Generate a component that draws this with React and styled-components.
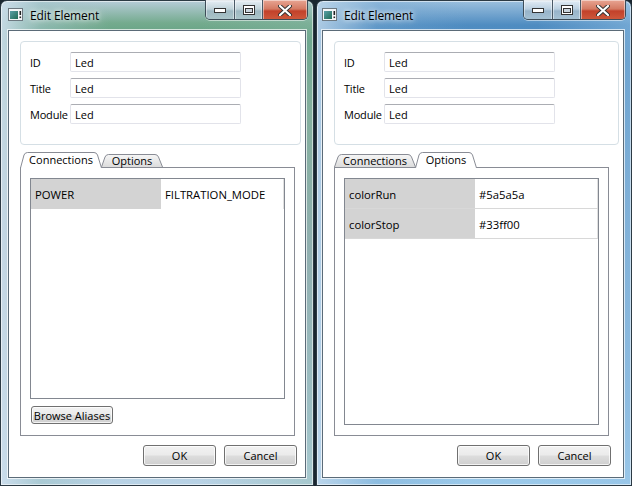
import React from "react";
import styled, { createGlobalStyle } from "styled-components";

const Global = createGlobalStyle`
  html, body { margin: 0; padding: 0; background: #16222b; }
  body { width: 632px; height: 486px; overflow: hidden; font-family: "Open Sans", "Noto Sans", sans-serif; }
  * { box-sizing: border-box; }
`;

const Desktop = styled.div`
  display: flex;
  gap: 2px;
  width: 632px;
  height: 486px;
  background: #1a2630;
`;

const frames = {
  green: `
    linear-gradient(90deg, rgba(205,222,236,0.9) 0px, rgba(160,196,200,0.6) 40px, rgba(90,160,125,0) 110px, rgba(0,0,0,0) 200px, rgba(140,185,170,0.4) 314px),
    linear-gradient(180deg, #b6ccd8 0px, #74ab8e 22px, #5e9d7f 40px, #7fa996 110px, #93a9b3 250px, #a9c4d6 420px, #b9d3e6 486px)
  `,
  blue: `
    linear-gradient(90deg, rgba(190,214,234,0.85) 0px, rgba(120,170,210,0.4) 60px, rgba(60,130,190,0) 150px, rgba(0,0,0,0) 220px, rgba(150,195,230,0.5) 316px),
    linear-gradient(180deg, #9cc0de 0px, #4f8cc1 24px, #4b88bd 60px, #6a9fcb 200px, #86b6dc 400px, #9ccaea 486px)
  `,
};

const Frame = styled.div`
  width: ${(p) => p.$w}px;
  height: 486px;
  border: 1px solid #2c3a44;
  border-radius: 7px 7px 0 0;
  background: ${(p) => frames[p.$tone]};
  box-shadow: inset 0 0 0 1px rgba(255,255,255,0.55);
  display: flex;
  flex-direction: column;
  padding: 0 ${(p) => p.$pr}px 7px ${(p) => p.$pl}px;
`;

const TitleBar = styled.div`
  height: 29px;
  display: flex;
  align-items: flex-start;
  position: relative;
`;

const AppIcon = styled.svg`
  margin: 7px 0 0 0;
  flex: none;
`;

const Title = styled.div`
  margin: 6px 0 0 7px;
  font-family: "Open Sans", sans-serif;
  font-size: 12px;
  color: #000;
  text-shadow: 0 0 8px rgba(255,255,255,0.95), 0 0 4px rgba(255,255,255,0.9);
  letter-spacing: -0.1px;
`;

const Caption = styled.div`
  margin-left: auto;
  margin-right: -2px;
  display: flex;
  height: 20px;
  margin-top: -1px;
`;

const CapGroup = styled.div`
  display: flex;
  border: 1px solid #3d4c58;
  border-top: none;
  border-radius: 0 0 5px 5px;
  overflow: hidden;
  box-shadow: 0 1px 0 rgba(255,255,255,0.5);
`;

const CapBtn = styled.div`
  width: ${(p) => p.$w}px;
  height: 20px;
  display: flex;
  align-items: center;
  justify-content: center;
  background: ${(p) =>
    p.$close
      ? "linear-gradient(180deg, #e8a593 0%, #d47a63 45%, #c2412a 55%, #cf5a3d 100%)"
      : "linear-gradient(180deg, rgba(240,245,250,0.85) 0%, rgba(205,218,228,0.75) 45%, rgba(160,182,198,0.75) 55%, rgba(185,205,215,0.8) 100%)"};
  border-left: ${(p) => (p.$first ? "none" : "1px solid #4a5966")};
  box-shadow: inset 0 0 0 1px rgba(255,255,255,0.45);
`;

const Client = styled.div`
  flex: 1;
  background: #ffffff;
  border: 1px solid #5b6b78;
  box-shadow: 0 0 0 1px rgba(255,255,255,0.7);
  display: flex;
  flex-direction: column;
  padding: 10px 4px 10px 11px;
`;

const GroupBox = styled.div`
  height: 104px;
  border: 1px solid #d5dfe5;
  border-radius: 4px;
  display: flex;
  flex-direction: column;
  gap: 6px;
  padding: 10px 0 0 9px;
`;

const FormRow = styled.div`
  display: flex;
  align-items: center;
  height: 20px;
`;

const Label = styled.div`
  width: 40px;
  font-size: 11px;
  color: #000;
  letter-spacing: -0.2px;
`;

const Input = styled.div`
  width: 171px;
  height: 20px;
  border: 1px solid #e2e3ea;
  border-top-color: #abadb3;
  border-radius: 2px;
  background: #fff;
  font-size: 11px;
  padding: 2px 0 0 4px;
  color: #000;
`;

const TabWidget = styled.div`
  width: 275px;
  margin-top: 7px;
  display: flex;
  flex-direction: column;
`;

const TabBar = styled.div`
  display: flex;
  align-items: flex-end;
  height: 15px;
  position: relative;
  z-index: 2;
`;

const TabItem = styled.div`
  position: relative;
  width: ${(p) => p.$w}px;
  height: ${(p) => (p.$active ? 16 : 13)}px;
  margin-bottom: ${(p) => (p.$active ? -1 : 0)}px;
  margin-left: ${(p) => (p.$first ? 0 : -1)}px;
  z-index: ${(p) => (p.$active ? 2 : 1)};
  font-size: 11px;
  color: #000;
  display: flex;
  justify-content: center;
  padding-top: ${(p) => (p.$active ? 1 : 0)}px;
  line-height: 14px;
`;

const TabShape = styled.svg`
  position: absolute;
  left: 0;
  top: 0;
  z-index: -1;
`;

const Pane = styled.div`
  height: 269px;
  border: 1px solid #898c95;
  background: #fff;
  padding: 10px 9px 0 9px;
  display: flex;
  flex-direction: column;
`;

const Table = styled.div`
  height: ${(p) => p.$h}px;
  border: 1px solid #828790;
  display: flex;
  flex-direction: column;
`;

const Row = styled.div`
  display: flex;
  height: 30px;
  border-bottom: ${(p) => (p.$line ? "1px solid #d8d8d8" : "none")};
`;

const Cell = styled.div`
  width: ${(p) => (p.$key ? "130px" : "123px")};
  background: ${(p) => (p.$key ? "#d3d3d3" : "#fff")};
  border-right: ${(p) => (p.$key ? "none" : "1px solid #e0e0e0")};
  font-size: 11.3px;
  color: #000;
  display: flex;
  align-items: center;
  padding-left: 4px;
  padding-top: 1px;
`;

const Button = styled.div`
  width: ${(p) => p.$w}px;
  height: ${(p) => p.$h}px;
  border: 1px solid #707070;
  border-radius: 3px;
  background: linear-gradient(180deg, #f2f2f2 0%, #ebebeb 48%, #dddddd 52%, #cfcfcf 100%);
  box-shadow: inset 0 0 0 1px rgba(255,255,255,0.75);
  font-size: 11px;
  color: #000;
  display: flex;
  align-items: center;
  justify-content: center;
`;

const BrowseWrap = styled.div`
  margin-top: 7px;
  margin-left: 1px;
`;

const Footer = styled.div`
  margin-top: 9px;
  display: flex;
  gap: 8px;
  justify-content: flex-start;
  padding-left: 123px;
`;

function WinIcon() {
  return (
    <AppIcon width="15" height="13" viewBox="0 0 15 13">
      <defs>
        <linearGradient id="ig" x1="0" y1="0" x2="1" y2="1">
          <stop offset="0" stopColor="#5aa0a8" />
          <stop offset="1" stopColor="#1f6b55" />
        </linearGradient>
      </defs>
      <rect x="0.5" y="0.5" width="14" height="12" fill="#f4f6f8" stroke="#6d7880" />
      <rect x="2" y="3" width="8" height="8" fill="url(#ig)" />
      <rect x="11.5" y="3" width="1.6" height="4" fill="#222" />
      <rect x="11.5" y="8.5" width="1.6" height="1.6" fill="#222" />
    </AppIcon>
  );
}

function CaptionButtons() {
  return (
    <Caption>
      <CapGroup>
        <CapBtn $w={28} $first>
          <svg width="12" height="6" viewBox="0 0 12 6">
            <rect x="0.5" y="1.5" width="11" height="4" fill="#fff" stroke="#333" />
          </svg>
        </CapBtn>
        <CapBtn $w={28}>
          <svg width="12" height="10" viewBox="0 0 12 10">
            <rect x="0.5" y="0.5" width="11" height="9" fill="#fff" stroke="#333" />
            <rect x="2.5" y="3.5" width="7" height="4" fill="#c9d4dd" stroke="#333" />
          </svg>
        </CapBtn>
        <CapBtn $w={45} $close>
          <svg width="14" height="11" viewBox="0 0 14 11">
            <path d="M2 1 L12 10 M12 1 L2 10" stroke="#333" strokeWidth="4" strokeLinecap="round" />
            <path d="M2 1 L12 10 M12 1 L2 10" stroke="#fff" strokeWidth="2.2" strokeLinecap="round" />
          </svg>
        </CapBtn>
      </CapGroup>
    </Caption>
  );
}

function Tab({ label, w, active, first }) {
  const h = active ? 16 : 13;
  const id = `tg${label}${active ? 1 : 0}`;
  return (
    <TabItem $w={w} $active={active} $first={first}>
      <TabShape width={w} height={h} viewBox={`0 0 ${w} ${h}`}>
        <defs>
          <linearGradient id={id} x1="0" y1="0" x2="0" y2="1">
            <stop offset="0" stopColor={active ? "#ffffff" : "#f6f6f6"} />
            <stop offset="1" stopColor={active ? "#ffffff" : "#dcdcdc"} />
          </linearGradient>
        </defs>
        <path
          d={`M0.5 ${h} L4 3 Q5 0.5 7.5 0.5 L${w - 8} 0.5 Q${w - 5.5} 0.5 ${w - 4.5} 3 L${w - 0.5} ${h}`}
          fill={`url(#${id})`}
          stroke="#898c95"
        />
      </TabShape>
      {label}
    </TabItem>
  );
}

function Window({ tone, w, pl, pr, tab }) {
  const conn = tab === "conn";
  return (
    <Frame $tone={tone} $w={w} $pl={pl} $pr={pr}>
      <TitleBar>
        <WinIcon />
        <Title>Edit Element</Title>
        <CaptionButtons />
      </TitleBar>
      <Client>
        <GroupBox>
          <FormRow>
            <Label>ID</Label>
            <Input>Led</Input>
          </FormRow>
          <FormRow>
            <Label>Title</Label>
            <Input>Led</Input>
          </FormRow>
          <FormRow>
            <Label>Module</Label>
            <Input>Led</Input>
          </FormRow>
        </GroupBox>
        <TabWidget>
          <TabBar>
            <Tab label="Connections" w={82} active={conn} first />
            <Tab label="Options" w={62} active={!conn} />
          </TabBar>
          <Pane>
            {conn ? (
              <>
                <Table $h={221}>
                  <Row>
                    <Cell $key>POWER</Cell>
                    <Cell>FILTRATION_MODE</Cell>
                  </Row>
                </Table>
                <BrowseWrap>
                  <Button $w={82} $h={18}>Browse Aliases</Button>
                </BrowseWrap>
              </>
            ) : (
              <Table $h={247}>
                <Row $line>
                  <Cell $key>colorRun</Cell>
                  <Cell>#5a5a5a</Cell>
                </Row>
                <Row $line>
                  <Cell $key>colorStop</Cell>
                  <Cell>#33ff00</Cell>
                </Row>
              </Table>
            )}
          </Pane>
        </TabWidget>
        <Footer>
          <Button $w={73} $h={21}>OK</Button>
          <Button $w={73} $h={21}>Cancel</Button>
        </Footer>
      </Client>
    </Frame>
  );
}

export default function App() {
  return (
    <>
      <Global />
      <Desktop>
        <Window tone="green" w={314} pl={7} pr={7} tab="conn" />
        <Window tone="blue" w={316} pl={5} pr={7} tab="opt" />
      </Desktop>
    </>
  );
}
